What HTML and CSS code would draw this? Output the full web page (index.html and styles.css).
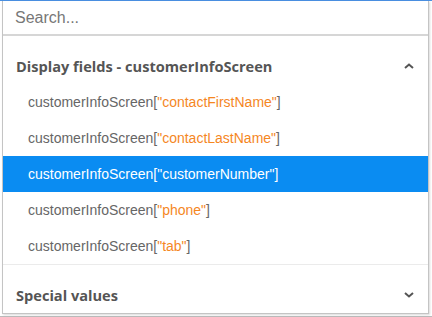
FILE: index.html
```html
<!DOCTYPE html>
<html lang="en">
<head>
  <meta charset="UTF-8" />
  <title>Field picker</title>
  <link rel="stylesheet" href="styles.css">
</head>
<body>
  <div class="backdrop">
    <div class="picker">
      <input class="search" type="text" placeholder="Search..." />

      <!-- Display fields group -->
      <div class="group-head">
        <span>Display fields - customerInfoScreen</span>
        <svg class="chev" width="10" height="6" viewBox="0 0 10 6"><path d="M1 5 L5 1.5 L9 5" fill="none" stroke="#555" stroke-width="2"/></svg>
      </div>
      <ul class="items">
        <li>customerInfoScreen[<em>"contactFirstName"</em>]</li>
        <li>customerInfoScreen[<em>"contactLastName"</em>]</li>
        <li class="active">customerInfoScreen[<em>"customerNumber"</em>]</li>
        <li>customerInfoScreen[<em>"phone"</em>]</li>
        <li>customerInfoScreen[<em>"tab"</em>]</li>
      </ul>

      <div class="group-head last">
        <span>Special values</span>
        <svg class="chev" width="10" height="6" viewBox="0 0 10 6"><path d="M1 1 L5 4.5 L9 1" fill="none" stroke="#555" stroke-width="2"/></svg>
      </div>
    </div>
  </div>
</body>
</html>
```

FILE: styles.css
```css
* { box-sizing: border-box; }
body {
  margin: 0;
  background: #fff;
  font-family: 'Liberation Sans', Arial, sans-serif;
}

.backdrop {
  width: 432px;
  height: 317px;
  border-top: 1px solid #4a90e2;
  border-bottom: 1px solid #bbb;
  padding: 0 3px 2px 2px;
}

.picker {
  background: #fff;
  border: 1px solid #c4c4c4;
  border-top: none;
  height: 313px;
  box-shadow: 1px 1px 2px rgba(0,0,0,0.15);
}

.search {
  display: block;
  width: 100%;
  height: 35px;
  border: none;
  border-bottom: 2px solid #d6d6d6;
  outline: none;
  padding: 0 12px;
  font-family: 'Liberation Sans', Arial, sans-serif;
  font-size: 16px;
  color: #333;
}

.search::placeholder { color: #777; }

.group-head {
  display: flex;
  align-items: center;
  justify-content: space-between;
  height: 48px;
  padding: 12px 14px 0 13px;
  font-family: 'Open Sans', sans-serif;
  font-weight: 700;
  font-size: 14.6px;
  color: #555;
}

.group-head.last {
  border-top: 1px solid #ebebeb;
}

.items {
  list-style: none;
  margin: 0;
  padding: 0;
}

.items li {
  height: 36px;
  line-height: 36px;
  padding-left: 25px;
  font-size: 14px;
  color: #666;
}

.items em {
  font-style: normal;
  color: #f5871f;
}

.items li.active {
  background: #0a8cf2;
  color: #fff;
}

.items li.active em { color: #fff; }
```
